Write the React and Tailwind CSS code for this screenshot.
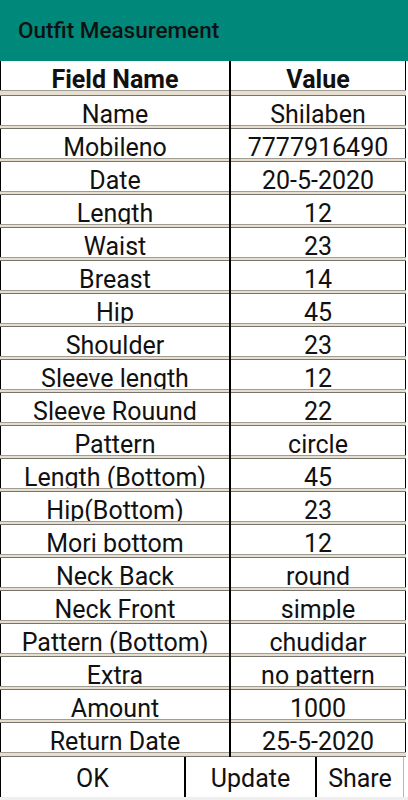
const rows = [
  ['Name', 'Shilaben'],
  ['Mobileno', '7777916490'],
  ['Date', '20-5-2020'],
  ['Length', '12'],
  ['Waist', '23'],
  ['Breast', '14'],
  ['Hip', '45'],
  ['Shoulder', '23'],
  ['Sleeve length', '12'],
  ['Sleeve Rouund', '22'],
  ['Pattern', 'circle'],
  ['Length (Bottom)', '45'],
  ['Hip(Bottom)', '23'],
  ['Mori bottom', '12'],
  ['Neck Back', 'round'],
  ['Neck Front', 'simple'],
  ['Pattern (Bottom)', 'chudidar'],
  ['Extra', 'no pattern'],
  ['Amount', '1000'],
  ['Return Date', '25-5-2020'],
];

const sepCell = 'border-t border-[#a29d94] border-b border-b-[#77736d] bg-[#e6dfd0]';

function Separator({ h }) {
  return (
    <div className={`grid grid-cols-[229px_2px_175px] ${h}`}>
      <div className={sepCell} />
      <div className="bg-black" />
      <div className={sepCell} />
    </div>
  );
}

function Row({ left, right, bold }) {
  const text = `h-[29px] overflow-hidden text-center text-[25px] leading-[25px] pt-[6px] whitespace-nowrap text-[#111] ${bold ? 'font-bold' : ''}`;
  return (
    <div className="grid grid-cols-[229px_2px_174px_1px] h-[29px] bg-white">
      <div className={`${text} border-l border-black`}>{left}</div>
      <div className="bg-black" />
      <div className={text}>{right}</div>
      <div className="bg-black" />
    </div>
  );
}

export default function App() {
  return (
    <div className="w-[408px] h-[800px] bg-white overflow-hidden" style={{ fontFamily: 'Roboto, "Liberation Sans", sans-serif' }}>
      <div className="h-[61px] bg-[#00887a] flex items-center pl-[18px]">
        <span className="text-[22.5px] font-medium text-[#111] pt-[1px]">Outfit Measurement</span>
      </div>

      <Row left="Field Name" right="Value" bold />
      <Separator h="h-[6px]" />
      {rows.map((r, i) => (
        <div key={r[0]}>
          <Row left={r[0]} right={r[1]} />
          <Separator h={i === rows.length - 1 ? 'h-[5px]' : 'h-[4px]'} />
        </div>
      ))}

      <div className="flex h-[40px] bg-white text-[25px] leading-[25px] text-[#111]">
        <div className="w-[184px] border-l border-black text-center pt-[9px]">OK</div>
        <div className="w-[2px] bg-black" />
        <div className="w-[129px] text-center pt-[9px]">Update</div>
        <div className="w-[2px] bg-black" />
        <div className="w-[86px] text-center pt-[9px]">Share</div>
        <div className="w-[1px] bg-[#b5b5b5]" />
      </div>
      <div className="h-[3px] bg-[#efefef]" />
    </div>
  );
}
